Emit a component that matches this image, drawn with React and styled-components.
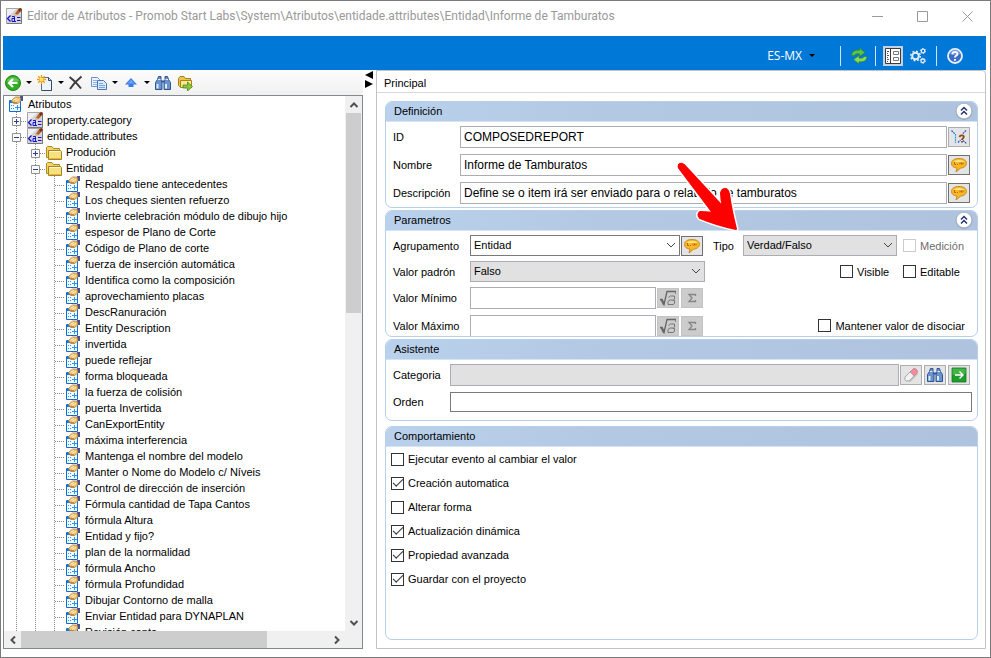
import React, { useState } from 'react';
import styled, { createGlobalStyle, css } from 'styled-components';

const colors = {
  blue: '#0078d7',
  frame: '#7a7a7a',
  line: '#d9d9d9',
  groupLine: '#b8cfea',
  field: '#abadb3',
  fieldDark: '#7a7a7a',
  disabled: '#e1e1e1',
  guide: '#8a8a8a',
};

const GlobalStyles = createGlobalStyle`
  * {
    box-sizing: border-box;
  }
  body {
    margin: 0;
    background: #fff;
    color: #000;
    font-family: "Liberation Sans", Arial, sans-serif;
    font-size: 11px;
    line-height: 16px;
  }
  button, input, select {
    font: inherit;
    color: inherit;
    margin: 0;
    padding: 0;
  }
  button {
    border: 0;
    background: none;
  }
`;

/* ---------- window frame ---------- */

const Window = styled.div`
  display: flex;
  flex-direction: column;
  height: 100vh;
  padding: 0 4px 8px 2px;
  border: 1px solid ${colors.frame};
  overflow: hidden;
`;

const TitleBar = styled.header`
  display: flex;
  align-items: center;
  flex: none;
  height: 30px;
  margin: 0 -4px 5px 0;
  padding-left: 3px;
  color: #999;
`;

const Title = styled.h1`
  flex: 1;
  margin: 0 0 0 5px;
  font-family: Roboto, "Noto Sans", sans-serif;
  font-size: 12px;
  font-weight: normal;
  white-space: nowrap;
`;

const WindowButton = styled.button`
  display: flex;
  align-items: center;
  justify-content: center;
  width: 45px;
  height: 30px;
`;

const Ribbon = styled.nav`
  display: flex;
  align-items: center;
  justify-content: flex-end;
  flex: none;
  height: 34px;
  padding: 5px 20px 0 0;
  background: ${colors.blue};
`;

const Language = styled.button`
  display: flex;
  align-items: center;
  gap: 7px;
  margin-right: 25px;
  font-family: "Open Sans", "Noto Sans", sans-serif;
  font-size: 12px;
  color: #fff;
`;

const Separator = styled.span`
  width: 1px;
  height: 20px;
  background: #cfe4f7;
`;

const RibbonButton = styled.button`
  display: flex;
  align-items: center;
  justify-content: center;
  width: 20px;
  height: 20px;
  margin: 0 ${(p) => p.$after || 7}px 0 ${(p) => p.$before || 7}px;
  background: ${(p) => (p.$active ? '#c3d3e6' : 'none')};
`;

const Columns = styled.div`
  display: flex;
  flex: 1;
  min-height: 0;
`;

/* ---------- left column ---------- */

const Sidebar = styled.aside`
  display: flex;
  flex-direction: column;
  width: 360px;
  flex: none;
`;

const Toolbar = styled.div`
  display: flex;
  align-items: center;
  flex: none;
  height: 25px;
  padding-left: 2px;
  border-radius: 0 0 4px 0;
  background: linear-gradient(#fcfcfc, #f0f0f0);
`;

const ToolItem = styled.div`
  display: flex;
  align-items: center;
  margin-right: ${(p) => (p.$menu ? 0 : 6)}px;
`;

const ToolButton = styled.button`
  display: flex;
  width: 16px;
  height: 16px;
`;

const MenuButton = styled.button`
  display: flex;
  align-items: center;
  justify-content: center;
  width: 16px;
  height: 16px;
`;

const Caret = styled.span`
  border: 3px solid transparent;
  border-top-color: #000;
  border-bottom: 0;
`;

const TreeBox = styled.div`
  display: grid;
  grid-template: minmax(0, 1fr) 17px / minmax(0, 1fr) 17px;
  flex: 1;
  min-height: 0;
  border: 1px solid #828790;
`;

const TreeList = styled.ul`
  margin: 0;
  padding: 0;
  overflow: hidden;
  list-style: none;
`;

const TreeRow = styled.li`
  display: flex;
  align-items: center;
  height: 16px;
  padding-left: 3px;
  white-space: nowrap;
`;

const dots = (angle) =>
  `repeating-linear-gradient(${angle}, ${colors.guide} 0 1px, transparent 1px 2px)`;

const Guide = styled.span`
  display: flex;
  align-items: center;
  justify-content: center;
  width: 19px;
  height: 16px;
  flex: none;
  background-image: ${dots('180deg')}, ${(p) => (p.$branch ? dots('90deg') : 'none')};
  background-size: 1px 16px, 10px 1px;
  background-position: 9px 0, 10px 9px;
  background-repeat: no-repeat;
`;

const Expander = styled.button`
  display: flex;
  width: 9px;
  height: 9px;
  margin-top: 2px;
`;

const TreeIcon = styled.span`
  display: flex;
  width: 16px;
  height: 16px;
  margin: 0 4px 0 1px;
  flex: none;
`;

const ScrollBar = styled.div`
  display: flex;
  flex-direction: ${(p) => (p.$vertical ? 'column' : 'row')};
  background: #f0f0f0;
`;

const ScrollArrow = styled.button`
  display: flex;
  align-items: center;
  justify-content: center;
  width: 17px;
  height: 17px;
`;

const ScrollTrack = styled.div`
  display: flex;
  flex-direction: inherit;
  flex: 1;
`;

const ScrollThumb = styled.div`
  flex: 0 0 ${(p) => p.$size};
  margin: ${(p) => (p.$inset ? '0 1px' : '0')};
  background: #cdcdcd;
`;

const Splitter = styled.div`
  display: flex;
  flex-direction: column;
  align-items: center;
  width: 13px;
  padding-top: 1px;
  flex: none;
`;

/* ---------- right column ---------- */

const Panel = styled.main`
  display: flex;
  flex-direction: column;
  flex: 1;
  min-width: 0;
  border: 1px solid #c3c3c3;
  border-radius: 0 4px 0 0;
`;

const PanelTitle = styled.h2`
  flex: none;
  margin: 0;
  padding: 4px 7px 1px;
  border-bottom: 1px solid ${colors.line};
  font-size: 11px;
  font-weight: normal;
`;

const PanelBody = styled.div`
  display: flex;
  flex-direction: column;
  flex: 1;
  padding: 8px 7px 8px 8px;
`;

const GroupBox = styled.section`
  display: flex;
  flex-direction: column;
  flex: ${(p) => (p.$fill ? 1 : 'none')};
  margin-bottom: ${(p) => p.$after || 0}px;
  border: 1px solid ${colors.groupLine};
  border-radius: 7px;
`;

const GroupHeader = styled.header`
  display: flex;
  align-items: center;
  justify-content: space-between;
  height: 20px;
  padding: 0 4px 2px 8px;
  border-bottom: 1px solid #d5e3f3;
  border-radius: 6px 6px 0 0;
  background: linear-gradient(90deg, #b9d1ec, #b3c8e2 40%, #afc3de);
`;

const GroupTitle = styled.h3`
  margin: 0;
  font-size: 11px;
  font-weight: normal;
`;

const CollapseButton = styled.button`
  display: flex;
  width: 18px;
  height: 18px;
`;

const Fields = styled.div`
  display: flex;
  flex-direction: column;
  gap: 6px;
  padding: 4px ${(p) => p.$right}px ${(p) => p.$bottom}px 7px;
`;

const Row = styled.div`
  display: flex;
  align-items: center;
  gap: 1px;
  height: ${(p) => p.$height || 22}px;
  padding-right: ${(p) => p.$end || 0}px;
`;

const Label = styled.label`
  width: ${(p) => p.$width}px;
  flex: none;
  margin-right: -1px;
  white-space: nowrap;
`;

const box = css`
  flex: 1;
  min-width: 0;
  width: 100%;
  height: 100%;
  border: 1px solid ${(p) => (p.$strong ? colors.fieldDark : colors.field)};
  border-radius: 0;
  background: ${(p) => (p.$grey ? colors.disabled : '#fff')};
  opacity: 1;
  color: #000;
`;

const Input = styled.input`
  ${box}
  padding: 0 3px;
  font-size: 12px;
`;

const SelectWrap = styled.span`
  display: flex;
  position: relative;
  flex: ${(p) => (p.$width ? `0 0 ${p.$width}px` : 1)};
  height: 21px;
  min-width: 0;
`;

const SelectBox = styled.select`
  ${box}
  appearance: none;
  padding: 0 20px 1px 3px;
`;

const SelectArrow = styled.svg`
  position: absolute;
  top: 7px;
  right: 4px;
  pointer-events: none;
`;

const IconButton = styled.button`
  display: flex;
  align-items: center;
  justify-content: center;
  width: 22px;
  height: 20px;
  margin-left: ${(p) => (p.$spaced ? 1 : 0)}px;
  flex: none;
  border: 1px solid ${(p) => (p.$strong ? '#707070' : '#adadad')};
  background: ${(p) => (p.disabled ? '#cccccc' : '#e4e4e4')};
  ${(p) => p.disabled && 'border-color: #c4c4c4;'}
`;

/* the last row is a little shorter than its boxes, the group cuts them */
const ParamGrid = styled.div`
  display: grid;
  grid-template-columns: minmax(0, 1fr) 257px;
  grid-template-rows: 21px 21px 23px 21px;
  gap: 5px 8px;
  padding: 4px 7px 0;
`;

const LastRow = styled.div`
  overflow: hidden;
`;

const RightCell = styled.div`
  display: flex;
  align-items: center;
  justify-content: ${(p) => (p.$end ? 'flex-end' : 'flex-start')};
  padding-right: ${(p) => p.$pad || 0}px;
`;

const TypeField = styled.div`
  display: flex;
  align-items: center;
  position: relative;
  margin-right: 6px;
`;

const Pointer = styled.svg`
  position: absolute;
  right: 156px;
  bottom: 21px;
  pointer-events: none;
`;

const CheckLabel = styled.label`
  display: flex;
  align-items: center;
  gap: 4px;
  width: ${(p) => (p.$width ? `${p.$width}px` : 'auto')};
  color: ${(p) => (p.$muted ? '#6d6d6d' : 'inherit')};
  white-space: nowrap;
`;

const CheckBox = styled.input`
  display: flex;
  align-items: center;
  justify-content: center;
  appearance: none;
  width: 13px;
  height: 13px;
  flex: none;
  border: 1px solid #333;
  background: #fff;
  &:disabled {
    border-color: #ccc;
  }
  &:checked::after {
    content: "";
    width: 9px;
    height: 4px;
    margin-top: -3px;
    border: solid #333;
    border-width: 0 0 1px 1px;
    transform: rotate(-45deg);
  }
`;

const Behaviors = styled.div`
  display: flex;
  flex-direction: column;
  gap: 8px;
  padding: 4px 5px;
`;

/* ---------- drawings ---------- */

const Svg = ({ size = 16, children }) => (
  <svg width={size} height={size} viewBox={`0 0 ${size} ${size}`} fill="none" aria-hidden="true">
    {children}
  </svg>
);

const AttributeFileIcon = () => (
  <Svg>
    <path d="M.5.5h15v15H.5z" fill="#d4d4d8" stroke="#a4a4a8" />
    <path d="M1 1h9L1 10z" fill="#f0f0f2" />
    <path d="M15.500 1v14.500H1" stroke="#77777c" />
    <path d="M4.500 7.500L1.500 10.500l3 3" stroke="#1414d0" strokeWidth="1.300" />
    <path d="M6 8.500h2.500v5M8.500 10.500H6v3h4M11 9.500h3.500M11 12.500h3.500" stroke="#1414d0" />
    <path d="M9 5.500L12 1.500 14.500 0 16 2 12 6.500 8.500 8z" fill="#b4602a" />
    <path d="M12 1.500L14.500 0 16 2 13.500 4z" fill="#7c3514" />
    <path d="M9 5.500l2.500 1.500-3 1z" fill="#f0c080" />
  </Svg>
);

const AttributeIcon = () => (
  <Svg>
    <path d="M1.500 4.500h11v11h-11z" fill="#f0f8ff" stroke="#0b6fd0" />
    <path d="M2 5h5v2H2z" fill="#1878d8" />
    <path d="M3 9.500h1M5 9.500h1M3 12.500h1M5 12.500h1M9.500 9v5M7 11.500h5" stroke="#3a8fe0" />
    <path d="M3.500 4.500L7.500 1h5.500v3.500L10 7.500H5.500z" fill="#efc070" stroke="#b98038" strokeWidth=".8" />
    <path d="M5.500 4l3.500-1.500M7 5.500L11 3.500" stroke="#fff2c4" />
    <path d="M5 6.500h4" stroke="#a06c28" strokeWidth=".7" />
    <path d="M12 0h3v5h-2z" fill="#50508c" />
  </Svg>
);

const FolderIcon = () => (
  <Svg>
    <path d="M.5 13.500V3.500l1-1H6l1.500 2h6v9z" fill="#f0d468" stroke="#b08a1c" />
    <path d="M2.500 15.500v-9h12l1 1v8z" fill="#f6e084" stroke="#a98218" />
    <path d="M3.500 7.500h10.500" stroke="#fffbd0" />
    <path d="M3.500 14.500h11" stroke="#dcb840" />
  </Svg>
);

const BackIcon = () => (
  <Svg>
    <circle cx="8" cy="8" r="7.500" fill="#2fae24" stroke="#1c8a16" />
    <path d="M2 6a6.500 6 0 0 1 12 0q-6 3-12 0z" fill="#79d468" opacity=".7" />
    <path d="M12.500 8H4.500M8 4L4 8l4 4" stroke="#fff" strokeWidth="2.200" />
  </Svg>
);

const NewIcon = () => (
  <Svg>
    <path d="M4.500 2.500h7l3 3v10h-10z" fill="#edf4fb" stroke="#5a6c88" />
    <path d="M11.500 2.500v3h3M14.500 6v9.500H5" stroke="#33486c" />
    <path d="M4.500 0v9M0 4.500h9M1.200 1.200l6.600 6.600M7.800 1.200L1.200 7.800" stroke="#f09a18" strokeWidth="1.300" />
    <circle cx="4.500" cy="4.500" r="2" fill="#ffe45c" />
  </Svg>
);

const DeleteIcon = () => (
  <Svg>
    <path d="M.5 2Q6 6 12 13.500M12.500 1.500Q5.500 7 1 14" stroke="#3c3c3c" strokeWidth="2" />
  </Svg>
);

const CopyIcon = () => (
  <Svg>
    <path d="M.5 2.500h6l2 2v7h-8z" fill="#eaf2fd" stroke="#6a94cc" />
    <path d="M2 5.500h4M2 7.500h4M2 9.500h4" stroke="#8fb2e0" />
    <path d="M6.500 5.500h6l3 3v6h-9z" fill="#dce9fb" stroke="#4676b8" />
    <path d="M8 8.500h4M8 10.500h6M8 12.500h6" stroke="#7ba2d8" />
  </Svg>
);

const UpIcon = () => (
  <Svg>
    <path d="M8 3L14 9.500h-3.500V12h-5V9.500H2z" fill="#3a7ce8" />
    <path d="M8 4.500l3.500 4h-7z" fill="#6ea2f6" />
  </Svg>
);

const BinocularsIcon = () => (
  <Svg>
    <path d="M3.500 1.500H6v3l1 3v7H.5v-7l2-3zM10 1.500h2.500l1 3 2 3v7H9v-7l1-3z" fill="#6a92cc" stroke="#2c5494" />
    <path d="M2.500 9v4.500M11 9v4.500" stroke="#dce9fa" strokeWidth="2" />
    <path d="M3 4.500h2.500M10.500 4.500H13" stroke="#e6effc" />
    <path d="M6.500 6.500h3" stroke="#2c5494" strokeWidth="2" />
  </Svg>
);

const FolderGoIcon = () => (
  <Svg>
    <path d="M1.500 10.500v-7L3 1.500h4l1.500 2h5v8h-11z" fill="#e8c450" stroke="#a98218" />
    <path d="M3.500 12.500v-7h11v7z" fill="#fae896" stroke="#a98218" />
    <path d="M6 10h4.500V7l5 4.500-5 4.500v-3H6z" fill="#8cc63c" stroke="#4c8c18" strokeWidth=".8" />
  </Svg>
);

const RefreshIcon = () => (
  <Svg>
    <path d="M.5 7.500C1 3 4 1.800 8.500 2.200V0L14 4.500 8.500 8.500V6C6 5.500 4 6 3.500 7.500z" fill="#5cc44c" stroke="#2c8a20" strokeWidth=".7" />
    <path d="M16 8.500C15.500 13 12.500 14.200 8 13.800V16L2.500 11.500 8 7.500V10c2.500.5 4.500 0 5-1.500z" fill="#86da5c" stroke="#2c8a20" strokeWidth=".7" />
  </Svg>
);

const FormIcon = () => (
  <Svg>
    <path d="M.5.500h15v15H.5z" fill="#fff" stroke="#3c3c3c" />
    <path d="M5.500 1v14" stroke="#3c3c3c" />
    <path d="M2 3.500h2M2 5.500h1M2 7.500h2M2 9.500h1M2 11.500h2M2 13.500h1" stroke="#555" />
    <path d="M8.500 3.500h5v3h-5zM8.500 9.500h5v3h-5z" stroke="#777" />
  </Svg>
);

const GearsIcon = () => (
  <Svg>
    <circle cx="5.500" cy="8" r="3.300" stroke="#e4ecf5" strokeWidth="2" />
    <circle cx="5.500" cy="8" r="4.800" stroke="#e4ecf5" strokeWidth="1.500" strokeDasharray="1.900 1.870" />
    <circle cx="13" cy="3" r="1.800" stroke="#e4ecf5" strokeWidth="1.300" />
    <circle cx="13" cy="3" r="2.600" stroke="#e4ecf5" strokeDasharray="1.360 1.360" />
    <circle cx="12.800" cy="12.800" r="1.800" stroke="#e4ecf5" strokeWidth="1.300" />
    <circle cx="12.800" cy="12.800" r="2.600" stroke="#e4ecf5" strokeDasharray="1.360 1.360" />
  </Svg>
);

const HelpIcon = () => (
  <Svg>
    <circle cx="8" cy="8" r="7" fill="#3a6cc8" stroke="#e8f0fb" strokeWidth="1.800" />
    <path d="M3 6a5 4.500 0 0 1 10 0q-5 2-10 0z" fill="#8cb0ec" opacity=".6" />
    <path d="M5.500 6.200C5.500 3 10.700 3.200 10.500 6 10.400 7.600 8 7.500 8 9.500M8 11v1.800" stroke="#fff" strokeWidth="1.900" />
  </Svg>
);

const BalloonIcon = () => (
  <Svg>
    <path d="M8 1.500c4.500 0 7.500 2 7.500 4.800S12.500 11 9.500 11.200L5 15l1-3.900C2.500 10.700.5 9 .5 6.300.5 3.500 3.500 1.500 8 1.500z" fill="#f8ba20" stroke="#c98a28" />
    <path d="M2.500 5C4 2.300 12 2.300 13.500 5z" fill="#ffe68c" />
    <path d="M3.500 5v2.500H5M6 7.500h1M9 5.500v2M10.500 5.500v2M12 5.500v2" stroke="#c05c1c" />
  </Svg>
);

const IdIcon = () => (
  <Svg>
    <path d="M.5 1.500L4 5M15 1.500L11.500 5M7 13.500L9.500 11M12 11.500l3.500 3" stroke="#2850e0" strokeWidth="1.200" strokeDasharray="1.800 .8" />
    <path d="M4.500 5v9" stroke="#20a0e8" strokeWidth="1.200" strokeDasharray="1.800 .8" />
    <path d="M8.500 8C9 5.500 13 6 12.800 8 12.700 9.300 11 9.300 11 11M11 12v1.500" stroke="#8c4a18" strokeWidth="1.800" />
  </Svg>
);

const RootIcon = () => (
  <Svg>
    <path d="M0 9.500h2l2 5L7 1.500h9V4" stroke="#666" strokeWidth="1.300" />
    <path d="M8.500 7.500l2-1.500h4v3l-1.500 1.500h1.500v3l-1.500 1h-5v-3l2-1.500h3" stroke="#777" />
    <path d="M1.500 9.500l2.500 5" stroke="#666" strokeWidth="2.200" />
  </Svg>
);

const SigmaIcon = () => (
  <Svg>
    <path d="M11.500 6V4.500H5L8 8l-3 3.500h6.500V10" stroke="#858585" strokeWidth="1.300" />
  </Svg>
);

const EraserIcon = () => (
  <Svg>
    <path d="M2 10l8-8q2-1 3.500.5T14 6l-8 8H3q-2-1-1-4z" fill="#f2f2f2" stroke="#a8a8a8" />
    <path d="M7 5l3-3q2-1 3.500.5T14 6l-3 3z" fill="#f08ca0" stroke="#d07888" strokeWidth=".6" />
    <path d="M6.500 15L15 6.500" stroke="#aaa" />
  </Svg>
);

const GoIcon = () => (
  <Svg>
    <path d="M1 1h14v14H1z" fill="#1f9c2a" stroke="#127a1c" strokeWidth=".8" />
    <path d="M1.500 1.500h13v5q-6 3-13 1z" fill="#5cc45c" opacity=".6" />
    <path d="M4 8h7.500M8.500 4.500L12 8l-3.500 3.500" stroke="#fff" strokeWidth="1.400" />
  </Svg>
);

const CollapseIcon = () => (
  <Svg size={18}>
    <circle cx="9" cy="9.500" r="8.300" fill="#8d9bb4" />
    <circle cx="9" cy="9" r="7.800" fill="#fff" stroke="#a2aec2" strokeWidth=".8" />
    <path d="M6 8.500l3-3 3 3M6 12.500l3-3 3 3" stroke="#25356c" strokeWidth="1.500" />
  </Svg>
);

const ExpanderIcon = ({ open }) => (
  <Svg size={9}>
    <path d="M.5.5h8v8h-8z" fill="#fafafa" stroke="#919191" />
    <path d={open ? 'M2 4.500h5' : 'M2 4.500h5M4.500 2v5'} stroke="#2b3f8c" />
  </Svg>
);

const turns = { up: 0, right: 90, down: 180, left: 270 };

const Arrow = ({ to }) => (
  <Svg size={10}>
    <path d="M1.500 7L5 3.500 8.500 7" stroke="#505050" strokeWidth="2" transform={`rotate(${turns[to]} 5 5)`} />
  </Svg>
);

const RedArrow = () => {
  const shape = 'M2 11Q1 8 3 7T7 8L46 50Q44 42 44 36 45 32 48 32T52 37Q54 52 59 72 40 68 23 61 20 58 23 55 29 55 36 56z';
  return (
    <Pointer width="64" height="78" viewBox="0 0 64 78" fill="none" aria-hidden="true">
      <path d={shape} stroke="#fff" strokeWidth="5" strokeLinejoin="round" />
      <path d={shape} fill="#f00" stroke="#f00" strokeWidth="2" strokeLinejoin="round" />
    </Pointer>
  );
};

/* ---------- pieces ---------- */

const Select = ({ id, options, width, grey, strong }) => (
  <SelectWrap $width={width}>
    <SelectBox id={id} $grey={grey} $strong={strong}>
      {options.map((option) => <option key={option}>{option}</option>)}
    </SelectBox>
    <SelectArrow width="10" height="7" viewBox="0 0 10 7" fill="none" aria-hidden="true">
      <path d="M1 1l4 4 4-4" stroke="#444" />
    </SelectArrow>
  </SelectWrap>
);

const Check = ({ text, checked = false, disabled, width }) => {
  const [on, setOn] = useState(checked);
  return (
    <CheckLabel $muted={disabled} $width={width}>
      <CheckBox type="checkbox" checked={on} disabled={disabled} onChange={() => setOn(!on)} />
      {text}
    </CheckLabel>
  );
};

const Group = ({ title, collapsible, after, fill, children }) => (
  <GroupBox $after={after} $fill={fill}>
    <GroupHeader>
      <GroupTitle>{title}</GroupTitle>
      {collapsible && <CollapseButton aria-label="Contraer"><CollapseIcon /></CollapseButton>}
    </GroupHeader>
    {children}
  </GroupBox>
);

const leaves = [
  'Respaldo tiene antecedentes',
  'Los cheques sienten refuerzo',
  'Invierte celebración módulo de dibujo hijo',
  'espesor de Plano de Corte',
  'Código de Plano de corte',
  'fuerza de inserción automática',
  'Identifica como la composición',
  'aprovechamiento placas',
  'DescRanuración',
  'Entity Description',
  'invertida',
  'puede reflejar',
  'forma bloqueada',
  'la fuerza de colisión',
  'puerta Invertida',
  'CanExportEntity',
  'máxima interferencia',
  'Mantenga el nombre del modelo',
  'Manter o Nome do Modelo c/ Níveis',
  'Control de dirección de inserción',
  'Fórmula cantidad de Tapa Cantos',
  'fórmula Altura',
  'Entidad y fijo?',
  'plan de la normalidad',
  'fórmula Ancho',
  'fórmula Profundidad',
  'Dibujar Contorno de malla',
  'Enviar Entidad para DYNAPLAN',
  'Revisión canto',
];

const nodes = [
  { text: 'Atributos', depth: 0, icon: AttributeIcon },
  { text: 'property.category', depth: 1, icon: AttributeFileIcon, open: false },
  { text: 'entidade.attributes', depth: 1, icon: AttributeFileIcon, open: true },
  { text: 'Produción', depth: 2, icon: FolderIcon, open: false },
  { text: 'Entidad', depth: 2, icon: FolderIcon, open: true },
  ...leaves.map((text) => ({ text, depth: 3, icon: AttributeIcon })),
];

const tools = [
  { name: 'Volver', icon: BackIcon, menu: true },
  { name: 'Nuevo', icon: NewIcon, menu: true },
  { name: 'Eliminar', icon: DeleteIcon },
  { name: 'Copiar', icon: CopyIcon, menu: true },
  { name: 'Subir', icon: UpIcon, menu: true },
  { name: 'Buscar', icon: BinocularsIcon },
  { name: 'Abrir carpeta', icon: FolderGoIcon },
];

const Tree = () => (
  <TreeBox>
    <TreeList>
      {nodes.map(({ text, depth, icon: Icon, open }) => (
        <TreeRow key={text}>
          {Array.from({ length: depth }, (_, i) => (
            <Guide key={i} $branch={i === depth - 1}>
              {i === depth - 1 && open !== undefined && (
                <Expander aria-label={text}><ExpanderIcon open={open} /></Expander>
              )}
            </Guide>
          ))}
          <TreeIcon><Icon /></TreeIcon>
          {text}
        </TreeRow>
      ))}
    </TreeList>
    <ScrollBar $vertical>
      <ScrollArrow aria-label="Arriba"><Arrow to="up" /></ScrollArrow>
      <ScrollTrack><ScrollThumb $size="40%" $inset /></ScrollTrack>
      <ScrollArrow aria-label="Abajo"><Arrow to="down" /></ScrollArrow>
    </ScrollBar>
    <ScrollBar>
      <ScrollArrow aria-label="Izquierda"><Arrow to="left" /></ScrollArrow>
      <ScrollTrack><ScrollThumb $size="80%" /></ScrollTrack>
      <ScrollArrow aria-label="Derecha"><Arrow to="right" /></ScrollArrow>
    </ScrollBar>
    <ScrollBar />
  </TreeBox>
);

const Definition = () => (
  <Group title="Definición" collapsible after={2}>
    <Fields $right={7} $bottom={3}>
      <Row>
        <Label htmlFor="id" $width={67}>ID</Label>
        <Input id="id" defaultValue="COMPOSEDREPORT" />
        <IconButton aria-label="Generar ID"><IdIcon /></IconButton>
      </Row>
      <Row>
        <Label htmlFor="name" $width={67}>Nombre</Label>
        <Input id="name" defaultValue="Informe de Tamburatos" />
        <IconButton $strong aria-label="Traducir nombre"><BalloonIcon /></IconButton>
      </Row>
      <Row>
        <Label htmlFor="description" $width={67}>Descripción</Label>
        <Input id="description" defaultValue="Define se o item irá ser enviado para o relatório de tamburatos" />
        <IconButton $strong aria-label="Traducir descripción"><BalloonIcon /></IconButton>
      </Row>
    </Fields>
  </Group>
);

const LimitRow = ({ id, text }) => (
  <Row $end={2}>
    <Label htmlFor={id} $width={77}>{text}</Label>
    <Input id={id} />
    <IconButton disabled aria-label="Fórmula"><RootIcon /></IconButton>
    <IconButton disabled $spaced aria-label="Suma"><SigmaIcon /></IconButton>
  </Row>
);

const Parameters = () => (
  <Group title="Parametros" collapsible after={2}>
    <ParamGrid>
      <Row $height={21} $end={2}>
        <Label htmlFor="group" $width={77}>Agrupamento</Label>
        <Select id="group" options={['Entidad']} strong />
        <IconButton $strong aria-label="Traducir"><BalloonIcon /></IconButton>
      </Row>
      <RightCell>
        <TypeField>
          <Label htmlFor="type" $width={31}>Tipo</Label>
          <Select id="type" options={['Verdad/Falso']} width={154} grey />
          <RedArrow />
        </TypeField>
        <Check text="Medición" disabled />
      </RightCell>
      <Row $height={21}>
        <Label htmlFor="default" $width={77}>Valor padrón</Label>
        <Select id="default" options={['Falso']} grey />
      </Row>
      <RightCell $end>
        <Check text="Visible" width={63} />
        <Check text="Editable" width={67} />
      </RightCell>
      <LimitRow id="minimum" text="Valor Mínimo" />
      <RightCell />
      <LastRow>
        <LimitRow id="maximum" text="Valor Máximo" />
      </LastRow>
      <RightCell $end $pad={5}>
        <Check text="Mantener valor de disociar" />
      </RightCell>
    </ParamGrid>
  </Group>
);

const Assistant = () => (
  <Group title="Asistente" after={5}>
    <Fields $right={5} $bottom={8}>
      <Row $end={2}>
        <Label htmlFor="category" $width={57}>Categoria</Label>
        <Input id="category" disabled $grey />
        <IconButton aria-label="Limpiar"><EraserIcon /></IconButton>
        <IconButton $spaced aria-label="Buscar"><BinocularsIcon /></IconButton>
        <IconButton $spaced aria-label="Ir"><GoIcon /></IconButton>
      </Row>
      <Row $height={20}>
        <Label htmlFor="order" $width={57}>Orden</Label>
        <Input id="order" $strong />
      </Row>
    </Fields>
  </Group>
);

const App = () => (
  <Window>
    <GlobalStyles />
    <TitleBar>
      <AttributeFileIcon />
      <Title>Editor de Atributos - Promob Start Labs\System\Atributos\entidade.attributes\Entidad\Informe de Tamburatos</Title>
      <WindowButton aria-label="Minimizar">
        <Svg size={11}><path d="M0 5.500h11" stroke="#999" /></Svg>
      </WindowButton>
      <WindowButton aria-label="Maximizar">
        <Svg size={11}><path d="M.5.5h10v10H.5z" stroke="#999" /></Svg>
      </WindowButton>
      <WindowButton aria-label="Cerrar">
        <Svg size={11}><path d="M.5.5l10 10M10.500.5l-10 10" stroke="#999" /></Svg>
      </WindowButton>
    </TitleBar>
    <Ribbon>
      <Language>ES-MX <Caret /></Language>
      <Separator />
      <RibbonButton $before={8} $after={6} aria-label="Actualizar"><RefreshIcon /></RibbonButton>
      <Separator />
      <RibbonButton $active $after={4} aria-label="Formulario"><FormIcon /></RibbonButton>
      <RibbonButton $before={1} $after={8} aria-label="Opciones"><GearsIcon /></RibbonButton>
      <Separator />
      <RibbonButton $before={8} $after={1} aria-label="Ayuda"><HelpIcon /></RibbonButton>
    </Ribbon>
    <Columns>
      <Sidebar>
        <Toolbar>
          {tools.map(({ name, icon: Icon, menu }) => (
            <ToolItem key={name} $menu={menu}>
              <ToolButton aria-label={name}><Icon /></ToolButton>
              {menu && <MenuButton aria-label={`Opciones de ${name}`}><Caret /></MenuButton>}
            </ToolItem>
          ))}
        </Toolbar>
        <Tree />
      </Sidebar>
      <Splitter>
        <svg width="9" height="17" viewBox="0 0 9 17" aria-hidden="true">
          <path d="M8 0v8L0 4zM0 9v8l8-4z" fill="#000" />
        </svg>
      </Splitter>
      <Panel>
        <PanelTitle>Principal</PanelTitle>
        <PanelBody>
          <Definition />
          <Parameters />
          <Assistant />
          <Group title="Comportamiento" fill>
            <Behaviors>
              <Check text="Ejecutar evento al cambiar el valor" />
              <Check text="Creación automatica" checked />
              <Check text="Alterar forma" />
              <Check text="Actualización dinámica" checked />
              <Check text="Propiedad avanzada" checked />
              <Check text="Guardar con el proyecto" checked />
            </Behaviors>
          </Group>
        </PanelBody>
      </Panel>
    </Columns>
  </Window>
);

export default App;
